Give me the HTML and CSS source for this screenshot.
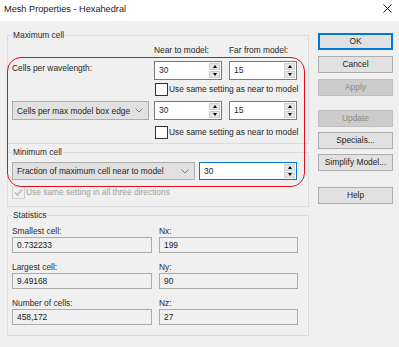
FILE: index.html
```html
<!DOCTYPE html>
<html>
<head>
<meta charset="utf-8">
<link rel="stylesheet" href="styles.css">
</head>
<body>
<div class="window">
  <div class="titlebar">
    <span class="title">Mesh Properties - Hexahedral</span>
    <svg class="close" width="9" height="9" viewBox="0 0 9 9"><path d="M0.5 0.5 L8.5 8.5 M8.5 0.5 L0.5 8.5" stroke="#111" stroke-width="1" fill="none"/></svg>
  </div>
  <div class="content">
    <div class="left">
      <fieldset class="group gmax">
        <legend>Maximum cell</legend>
        <div class="mrow hdr">
          <span></span><span>Near to model:</span><span>Far from model:</span>
        </div>
        <div class="mrow r1">
          <span class="lbl">Cells per wavelength:</span>
          <div class="spin"><span class="val">30</span><span class="ud"><span class="up"></span><span class="dn"></span></span></div>
          <div class="spin"><span class="val">15</span><span class="ud"><span class="up"></span><span class="dn"></span></span></div>
        </div>
        <div class="mrow c1">
          <span></span>
          <label class="chkrow span2"><span class="chk"></span><span>Use same setting as near to model</span></label>
        </div>
        <div class="mrow r2">
          <div class="combo"><span>Cells per max model box edge</span><svg width="8" height="5" viewBox="0 0 8 5"><path d="M0.5 0.5 L4 4 L7.5 0.5" stroke="#7a7a7a" fill="none"/></svg></div>
          <div class="spin"><span class="val">30</span><span class="ud"><span class="up"></span><span class="dn"></span></span></div>
          <div class="spin"><span class="val">15</span><span class="ud"><span class="up"></span><span class="dn"></span></span></div>
        </div>
        <div class="mrow c2">
          <span></span>
          <label class="chkrow span2"><span class="chk"></span><span>Use same setting as near to model</span></label>
        </div>
      </fieldset>
      <fieldset class="group gmin">
        <legend>Minimum cell</legend>
        <div class="minrow">
          <div class="combo wide"><span>Fraction of maximum cell near to model</span><svg width="8" height="5" viewBox="0 0 8 5"><path d="M0.5 0.5 L4 4 L7.5 0.5" stroke="#7a7a7a" fill="none"/></svg></div>
          <div class="spin focus"><span class="val">30</span><span class="ud"><span class="up"></span><span class="dn"></span></span></div>
        </div>
        <label class="chkrow disabled"><span class="chk checked"><svg width="11" height="11" viewBox="0 0 11 11"><path d="M2 5.5 L4.5 8 L9 2.5" stroke="#bdbdbd" stroke-width="1.6" fill="none"/></svg></span><span>Use same setting in all three directions</span></label>
      </fieldset>
      <fieldset class="group gstats">
        <legend>Statistics</legend>
        <div class="stats">
          <div class="cell"><span class="slbl">Smallest cell:</span><div class="ro">0.732233</div></div>
          <div class="cell"><span class="slbl">Nx:</span><div class="ro">199</div></div>
          <div class="cell"><span class="slbl">Largest cell:</span><div class="ro">9.49168</div></div>
          <div class="cell"><span class="slbl">Ny:</span><div class="ro">90</div></div>
          <div class="cell"><span class="slbl">Number of cells:</span><div class="ro">458,172</div></div>
          <div class="cell"><span class="slbl">Nz:</span><div class="ro">27</div></div>
        </div>
      </fieldset>
    </div>
    <div class="buttons">
      <div class="btn default">OK</div>
      <div class="btn g6">Cancel</div>
      <div class="btn g6 disabled">Apply</div>
      <div class="btn g14 disabled">Update</div>
      <div class="btn g5">Specials...</div>
      <div class="btn g5">Simplify Model...</div>
      <div class="btn g16">Help</div>
    </div>
  </div>
  <div class="highlight"></div>
</div>
</body>
</html>
```
FILE: styles.css
```css
html, body {
  margin: 0;
  padding: 0;
}
body {
  width: 399px;
  height: 347px;
  overflow: hidden;
  background: #f0f0f0;
  font-family: "Liberation Sans", Arial, sans-serif;
  font-size: 8.4px;
  color: #1e1e1e;
  white-space: nowrap;
}
.window {
  position: relative;
  width: 399px;
  height: 347px;
}
.titlebar {
  height: 21px;
  background: #fff;
  display: flex;
  align-items: center;
  justify-content: space-between;
  padding: 0 7px 0 4px;
  box-sizing: border-box;
}
.title {
  font-size: 9.2px;
  color: #1a1a1a;
  margin-top: -4px;
}
.close {
  margin-top: -4px;
}
.content {
  display: flex;
  gap: 9px;
  padding: 0 6px 0 7px;
}
.left {
  width: 302px;
  display: flex;
  flex-direction: column;
}
.group {
  margin: 0;
  border: 1px solid #dcdcdc;
  min-width: 0;
}
.group legend {
  padding: 0 1px;
  line-height: 12px;
  color: #2a2a2a;
}
.gmax {
  margin-top: 8px;
  padding: 3px 0 4px 4px;
}
.mrow {
  display: grid;
  grid-template-columns: 135px 68px 68px;
  column-gap: 7px;
  align-items: center;
}
.hdr {
  line-height: 12px;
}
.r1 {
  margin-top: 5px;
}
.c1 {
  margin-top: 3px;
}
.r2 {
  margin-top: 5px;
}
.c2 {
  margin-top: 6px;
}
.span2 {
  grid-column: 2 / 4;
}
.lbl {
  align-self: start;
  line-height: 12px;
  margin-top: 1px;
}
.spin {
  display: flex;
  height: 19px;
  box-sizing: border-box;
  border: 1px solid #7a7a7a;
  background: #fff;
}
.spin.focus {
  border-color: #0078d7;
}
.spin .val {
  flex: 1;
  padding-left: 4px;
  line-height: 17px;
}
.ud {
  width: 11px;
  display: flex;
  flex-direction: column;
  gap: 1px;
  padding: 1px 1px 1px 0;
  background: #fff;
}
.ud span {
  flex: 1;
  background: #e5e5e5;
  border: 1px solid #d0d0d0;
  display: flex;
  align-items: center;
  justify-content: center;
}
.ud .up::before {
  content: "";
  border-left: 2.5px solid transparent;
  border-right: 2.5px solid transparent;
  border-bottom: 3px solid #000;
}
.ud .dn::before {
  content: "";
  border-left: 2.5px solid transparent;
  border-right: 2.5px solid transparent;
  border-top: 3px solid #000;
}
.chkrow {
  display: flex;
  align-items: center;
  height: 13px;
  line-height: 13px;
  margin-left: 1px;
}
.chk {
  width: 13px;
  height: 13px;
  box-sizing: border-box;
  border: 1px solid #333;
  background: #fff;
  margin-right: 1px;
  display: flex;
  align-items: center;
  justify-content: center;
  flex: none;
}
.chkrow.disabled {
  color: #a0a0a0;
  margin-top: 6px;
  margin-left: 0;
}
.chkrow.disabled .chk {
  border-color: #cfcfcf;
  background: #f0f0f0;
}
.combo {
  display: flex;
  align-items: center;
  justify-content: space-between;
  height: 19px;
  width: 137px;
  justify-self: start;
  box-sizing: border-box;
  background: #e1e1e1;
  border: 1px solid #adadad;
  padding: 0 5px 0 4px;
}
.gmin {
  margin-top: 2px;
  padding: 4px 0 7px 4px;
}
.minrow {
  display: flex;
  align-items: center;
  gap: 4px;
}
.combo.wide {
  width: 183px;
  height: 18px;
}
.minrow .spin {
  width: 98px;
  height: 18px;
}
.minrow .spin .val {
  line-height: 16px;
}
.gstats {
  margin-top: 2px;
  padding: 4px 0 10px 4px;
}
.stats {
  display: grid;
  grid-template-columns: 140px 139px;
  column-gap: 7px;
  row-gap: 8px;
}
.cell {
  display: flex;
  flex-direction: column;
}
.slbl {
  line-height: 12px;
  color: #2a2a2a;
}
.ro {
  height: 16px;
  box-sizing: border-box;
  border: 1px solid #ababab;
  background: #f0f0f0;
  padding-left: 4px;
  line-height: 14px;
  color: #1a1a1a;
}
.buttons {
  width: 75px;
  padding-top: 12px;
  display: flex;
  flex-direction: column;
}
.btn {
  height: 17px;
  box-sizing: border-box;
  border: 1px solid #adadad;
  background: #e1e1e1;
  text-align: center;
  line-height: 15px;
}
.btn.default {
  border-color: #0078d7;
  box-shadow: inset 0 0 0 1px #0078d7;
}
.btn.disabled {
  background: #cccccc;
  border-color: #bfbfbf;
  color: #8a8a8a;
}
.g5 { margin-top: 5px; }
.g6 { margin-top: 6px; }
.g14 { margin-top: 14px; }
.g16 { margin-top: 16px; }
.highlight {
  position: absolute;
  left: 7px;
  top: 57px;
  width: 298px;
  height: 130px;
  box-sizing: border-box;
  border: 1.5px solid #e3101b;
  border-radius: 14px;
  pointer-events: none;
}
```
